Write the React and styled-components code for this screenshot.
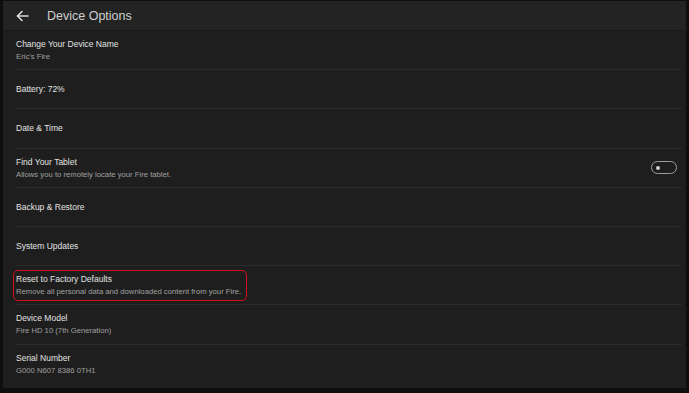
import React from "react";
import styled, { createGlobalStyle } from "styled-components";

const Global = createGlobalStyle`
  html, body {
    margin: 0;
    padding: 0;
    background: #0e0e0e;
  }
  * {
    box-sizing: border-box;
  }
`;

const Frame = styled.div`
  width: 689px;
  height: 393px;
  padding: 1px 3px 5px 3px;
  background: #0e0e0e;
  display: flex;
  font-family: "Liberation Sans", Arial, sans-serif;
`;

const Screen = styled.div`
  flex: 1;
  background: #1e1e1e;
  display: flex;
  flex-direction: column;
`;

const Header = styled.div`
  height: 30px;
  flex: none;
  background: #232323;
  border-bottom: 1px solid #181818;
  display: flex;
  align-items: center;
  padding-left: 13px;
  gap: 18px;
`;

const HeaderTitle = styled.span`
  color: #cfcfcf;
  font-size: 12.5px;
`;

const List = styled.div`
  display: flex;
  flex-direction: column;
  padding: 0 4px 0 13px;
`;

const Row = styled.div`
  height: 39.2px;
  display: flex;
  align-items: center;
  justify-content: space-between;
  padding-right: 5px;
  border-bottom: ${props => (props.last ? "none" : "1px solid #2b2b2b")};
`;

const Texts = styled.div`
  display: flex;
  flex-direction: column;
  gap: 4px;
`;

const Highlight = styled.div`
  display: flex;
  flex-direction: column;
  gap: 4px;
  margin-left: -3px;
  padding: 3px 5px 4px 2px;
  border: 1.5px solid #d3121c;
  border-radius: 5px;
`;

const Title = styled.span`
  color: #e2e2e2;
  font-size: 8.5px;
  line-height: 10px;
`;

const Sub = styled.span`
  color: #a0a0a0;
  font-size: 7.7px;
  line-height: 8px;
`;

const Toggle = styled.div`
  width: 26px;
  height: 13px;
  border: 1.5px solid #9d9d9d;
  border-radius: 7px;
  display: flex;
  align-items: center;
  padding-left: 4px;
`;

const Knob = styled.div`
  width: 4px;
  height: 4px;
  border-radius: 50%;
  background: #cfcfcf;
`;

const BackArrow = () => (
  <svg width="13" height="12" viewBox="0 0 13 12" fill="none" stroke="#dcdcdc" strokeWidth="1.6" strokeLinecap="round" strokeLinejoin="round">
    <path d="M12 6H1.5" />
    <path d="M6 1.5L1.5 6L6 10.5" />
  </svg>
);

const items = [
  { title: "Change Your Device Name", sub: "Eric's Fire" },
  { title: "Battery: 72%" },
  { title: "Date & Time" },
  { title: "Find Your Tablet", sub: "Allows you to remotely locate your Fire tablet.", toggle: true },
  { title: "Backup & Restore" },
  { title: "System Updates" },
  { title: "Reset to Factory Defaults", sub: "Remove all personal data and downloaded content from your Fire.", marked: true },
  { title: "Device Model", sub: "Fire HD 10 (7th Generation)" },
  { title: "Serial Number", sub: "G000 N607 8386 0TH1" }
];

const App = () => {
  return (
    <>
      <Global />
      <Frame>
        <Screen>
          <Header>
            <BackArrow />
            <HeaderTitle>Device Options</HeaderTitle>
          </Header>
          <List>
            {items.map((item, i) => {
              const Wrap = item.marked ? Highlight : Texts;
              return (
                <Row key={item.title} last={i === items.length - 1}>
                  <Wrap>
                    <Title>{item.title}</Title>
                    {item.sub && <Sub>{item.sub}</Sub>}
                  </Wrap>
                  {item.toggle && (
                    <Toggle>
                      <Knob />
                    </Toggle>
                  )}
                </Row>
              );
            })}
          </List>
        </Screen>
      </Frame>
    </>
  );
};

export default App;
